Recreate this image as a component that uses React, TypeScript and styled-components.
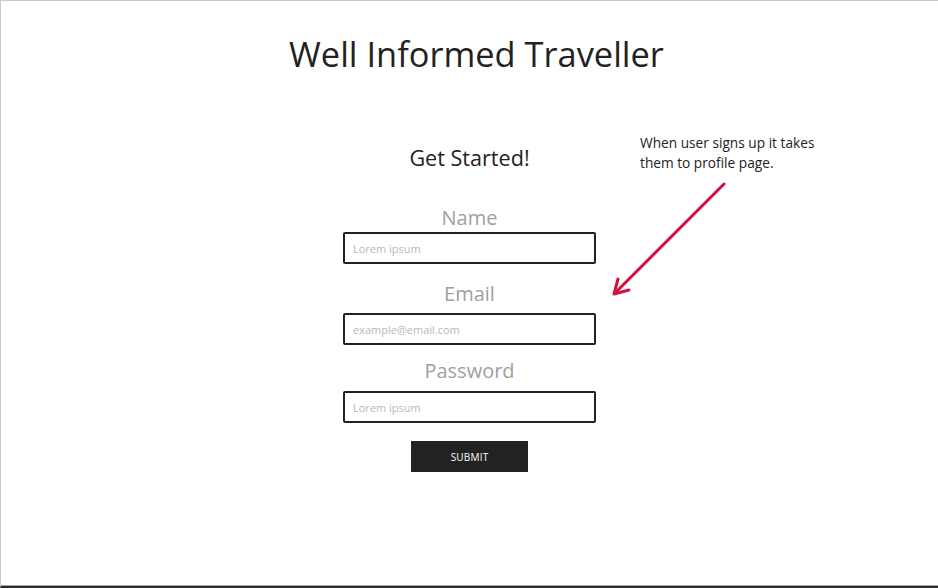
import React from 'react';
import styled, { createGlobalStyle } from 'styled-components';

const GlobalStyle = createGlobalStyle`
  html, body {
    margin: 0;
    padding: 0;
    background: #ffffff;
  }
  body {
    font-family: "Open Sans", "Noto Sans", "Liberation Sans", sans-serif;
    color: #222222;
  }
`;

const Frame = styled.div`
  position: relative;
  box-sizing: border-box;
  width: 938px;
  height: 588px;
  border-top: 1px solid #c9c9c9;
  border-left: 1px solid #c9c9c9;
  border-bottom: 2px solid #2b2b2b;
  box-shadow: inset 0 -1px 0 #a8a8a8;
  display: flex;
  flex-direction: column;
  align-items: center;
  overflow: hidden;
`;

const Title = styled.h1`
  margin: 31px 0 0 14px;
  font-size: 34.4px;
  line-height: 44px;
  font-weight: 400;
  color: #222222;
`;

const SignupForm = styled.form`
  margin-top: 68px;
  display: flex;
  flex-direction: column;
  align-items: center;
  width: 253px;
`;

const FormTitle = styled.h2`
  margin: 0;
  font-size: 21.6px;
  line-height: 28px;
  font-weight: 400;
  color: #222222;
`;

const Field = styled.div<{ $top: number }>`
  margin-top: ${(p) => p.$top}px;
  display: flex;
  flex-direction: column;
  align-items: center;
  width: 100%;
`;

const Label = styled.label<{ $gap: number }>`
  margin-bottom: ${(p) => p.$gap}px;
  font-size: 20px;
  line-height: 26px;
  color: #a0a0a0;
`;

const TextInput = styled.input`
  box-sizing: border-box;
  width: 253px;
  height: 32px;
  padding: 0 8px;
  border: 2px solid #222222;
  border-radius: 2px;
  font-family: inherit;
  font-size: 11px;
  color: #333333;
  outline: none;
  &::placeholder {
    color: #b8b8b8;
  }
`;

const SubmitButton = styled.button`
  margin-top: 18px;
  width: 117px;
  height: 31px;
  border: none;
  background: #222222;
  color: #ffffff;
  font-family: inherit;
  font-size: 10px;
  letter-spacing: 0.2px;
  cursor: pointer;
`;

const Note = styled.p`
  position: absolute;
  left: 639px;
  top: 132px;
  margin: 0;
  width: 200px;
  font-size: 13.7px;
  line-height: 20px;
  color: #222222;
`;

const Arrow = styled.svg`
  position: absolute;
  left: 600px;
  top: 175px;
`;

export default function App() {
  return (
    <>
      <GlobalStyle />
      <Frame>
        <Title>Well Informed Traveller</Title>
        <SignupForm onSubmit={(e) => e.preventDefault()}>
          <FormTitle>Get Started!</FormTitle>
          <Field $top={33}>
            <Label $gap={1}>Name</Label>
            <TextInput placeholder="Lorem ipsum" />
          </Field>
          <Field $top={17}>
            <Label $gap={6}>Email</Label>
            <TextInput placeholder="example@email.com" />
          </Field>
          <Field $top={13}>
            <Label $gap={7}>Password</Label>
            <TextInput type="password" placeholder="Lorem ipsum" />
          </Field>
          <SubmitButton type="submit">SUBMIT</SubmitButton>
        </SignupForm>
        <Note>
          When user signs up it takes
          <br />
          them to profile page.
        </Note>
        <Arrow width="140" height="130" viewBox="0 0 140 130">
          <g stroke="#d3123b" strokeWidth="3" strokeLinecap="round" fill="none">
            <line x1="123" y1="8" x2="14" y2="117" />
            <polyline points="17,103 13,118 28,114" strokeLinejoin="round" />
          </g>
        </Arrow>
      </Frame>
    </>
  );
}
